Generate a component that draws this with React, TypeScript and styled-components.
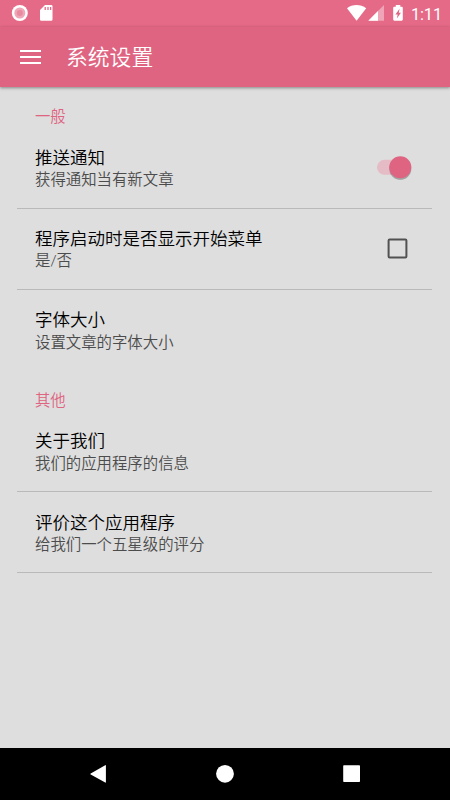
import React from "react";
import styled, { createGlobalStyle } from "styled-components";

const PINK = "#df6481";

const GlobalStyle = createGlobalStyle`
  * { box-sizing: border-box; }
  body { margin: 0; }
`;

const Screen = styled.div`
  width: 450px;
  height: 800px;
  display: flex;
  flex-direction: column;
  overflow: hidden;
  background: #dedede;
  font-family: Roboto, "Noto Sans CJK SC", sans-serif;
`;

const StatusBar = styled.div`
  flex: none;
  height: 27px;
  display: flex;
  align-items: flex-start;
  justify-content: space-between;
  background: #e56a87;
`;

const StatusIcons = styled.svg`
  display: block;
`;

const StatusRight = styled.div`
  display: flex;
`;

const Clock = styled.span`
  width: 41px;
  padding-left: 2px;
  color: #fff;
  font-size: 16.5px;
  line-height: 29px;
  letter-spacing: -0.2px;
`;

const Toolbar = styled.header`
  flex: none;
  height: 60px;
  display: flex;
  align-items: center;
  padding-left: 20px;
  gap: 25px;
  background: ${PINK};
  box-shadow: 0 1px 3px rgba(0, 0, 0, 0.4);
  z-index: 1;
`;

const PageTitle = styled.h1`
  margin: 0;
  padding-top: 2px;
  font-size: 21.8px;
  line-height: 30px;
  font-weight: 350;
  color: #fff;
`;

const Content = styled.main`
  flex: 1;
  padding: 0.6px 18px 0 17px;
`;

const Category = styled.h2`
  margin: 0;
  height: 39.7px;
  padding: 17.4px 18px 0;
  font-size: 15.35px;
  line-height: 24px;
  font-weight: 350;
  color: ${PINK};
`;

const Row = styled.div<{ $divider?: boolean }>`
  height: 81.3px;
  display: flex;
  justify-content: space-between;
  padding: 19.5px 18px 0;
  border-bottom: ${(p) => (p.$divider ? "1.4px solid #b9b9b9" : "0")};
`;

const RowTitle = styled.div`
  font-size: 17.5px;
  line-height: 22.3px;
  font-weight: 350;
  color: #000;
`;

const RowSummary = styled.div`
  font-size: 15.4px;
  line-height: 22.2px;
  font-weight: 350;
  color: #4c4c4c;
`;

const Control = styled.svg`
  flex: none;
  margin: -1px -2px 0 0;
`;

const NavBar = styled.nav`
  flex: none;
  height: 52px;
  background: #000;
  display: flex;
  align-items: center;
  justify-content: center;
  gap: 99px;
`;

const Switch = () => (
  <Control width="44" height="44" viewBox="372 146 44 44">
    <rect x="377" y="159.8" width="32" height="15" rx="7.5" fill="#e5bbc6" />
    <circle cx="400.3" cy="168.6" r="11.3" fill="#000" opacity=".1" />
    <circle cx="400.3" cy="169" r="10.8" fill="#000" opacity=".18" />
    <circle cx="400.3" cy="167.3" r="11" fill={PINK} />
  </Control>
);

const Checkbox = () => (
  <Control width="44" height="44" viewBox="372 227 44 44">
    <rect x="388.6" y="239.6" width="17.8" height="18" rx="1" fill="none" stroke="#515151" strokeWidth="2" />
  </Control>
);

interface SettingProps {
  title: string;
  summary: string;
  divider?: boolean;
  control?: React.ReactNode;
}

const Setting = ({ title, summary, divider = true, control }: SettingProps) => (
  <Row $divider={divider}>
    <div>
      <RowTitle>{title}</RowTitle>
      <RowSummary>{summary}</RowSummary>
    </div>
    {control}
  </Row>
);

export default function App() {
  return (
    <>
      <GlobalStyle />
      <Screen>
        <StatusBar>
          <StatusIcons width="60" height="27">
            <circle cx="19.8" cy="13" r="8" fill="#fff" />
            <circle cx="19.8" cy="13" r="5.5" fill="#efa6b7" />
            <circle cx="19.8" cy="13" r="3" fill="#e88ba1" />
            <path d="M45 5h6.2a1.3 1.3 0 0 1 1.3 1.3v13.2a1.3 1.3 0 0 1-1.3 1.3H41.3a1.3 1.3 0 0 1-1.3-1.3V10z" fill="#fff" />
            <path d="M45.2 7v3M48 7v3M50.6 7v3" stroke="#e56a87" strokeWidth="1.3" />
          </StatusIcons>
          <StatusRight>
            <StatusIcons width="64" height="27" viewBox="345 0 64 27">
              <path d="M347 8.3C352.5 4 360.5 4 366.2 8.3L356.6 20.7z" fill="#fff" />
              <path d="M384 5v15.7h-15.7z" fill="#fff" opacity=".4" />
              <path d="M378 11v9.7h-9.7z" fill="#fff" />
              <path d="M395.8 5h4.5v1.8h1.4a1.1 1.1 0 0 1 1.1 1.1v11.7a1.1 1.1 0 0 1-1.1 1.1h-7.4a1.1 1.1 0 0 1-1.1-1.1V7.9a1.1 1.1 0 0 1 1.1-1.1h1.5z" fill="#fff" />
              <path d="M399.6 8.8l-4.2 5.8h2.3l-.8 4 4-5.8h-2.1z" fill="#df6481" />
            </StatusIcons>
            <Clock>1:11</Clock>
          </StatusRight>
        </StatusBar>
        <Toolbar>
          <svg width="21" height="16" viewBox="0 0 21 16">
            <path d="M0 2h21M0 8h21M0 14h21" stroke="#fff" strokeWidth="2.1" />
          </svg>
          <PageTitle>系统设置</PageTitle>
        </Toolbar>
        <Content>
          <Category>一般</Category>
          <Setting title="推送通知" summary="获得通知当有新文章" control={<Switch />} />
          <Setting title="程序启动时是否显示开始菜单" summary="是/否" control={<Checkbox />} />
          <Setting title="字体大小" summary="设置文章的字体大小" divider={false} />
          <Category>其他</Category>
          <Setting title="关于我们" summary="我们的应用程序的信息" />
          <Setting title="评价这个应用程序" summary="给我们一个五星级的评分" />
        </Content>
        <NavBar>
          <svg width="28" height="28" viewBox="84 760 28 28">
            <path d="M105.2 765.2q.7-.4.7.5v16.4q0 .9-.7.5L90.7 774.6q-.9-.6 0-1.2z" fill="#fff" />
          </svg>
          <svg width="28" height="28" viewBox="211 760 28 28">
            <circle cx="225" cy="773.8" r="8.9" fill="#fff" />
          </svg>
          <svg width="28" height="28" viewBox="338 760 28 28">
            <rect x="343.2" y="765.3" width="16.8" height="16.7" rx=".8" fill="#fff" />
          </svg>
        </NavBar>
      </Screen>
    </>
  );
}
